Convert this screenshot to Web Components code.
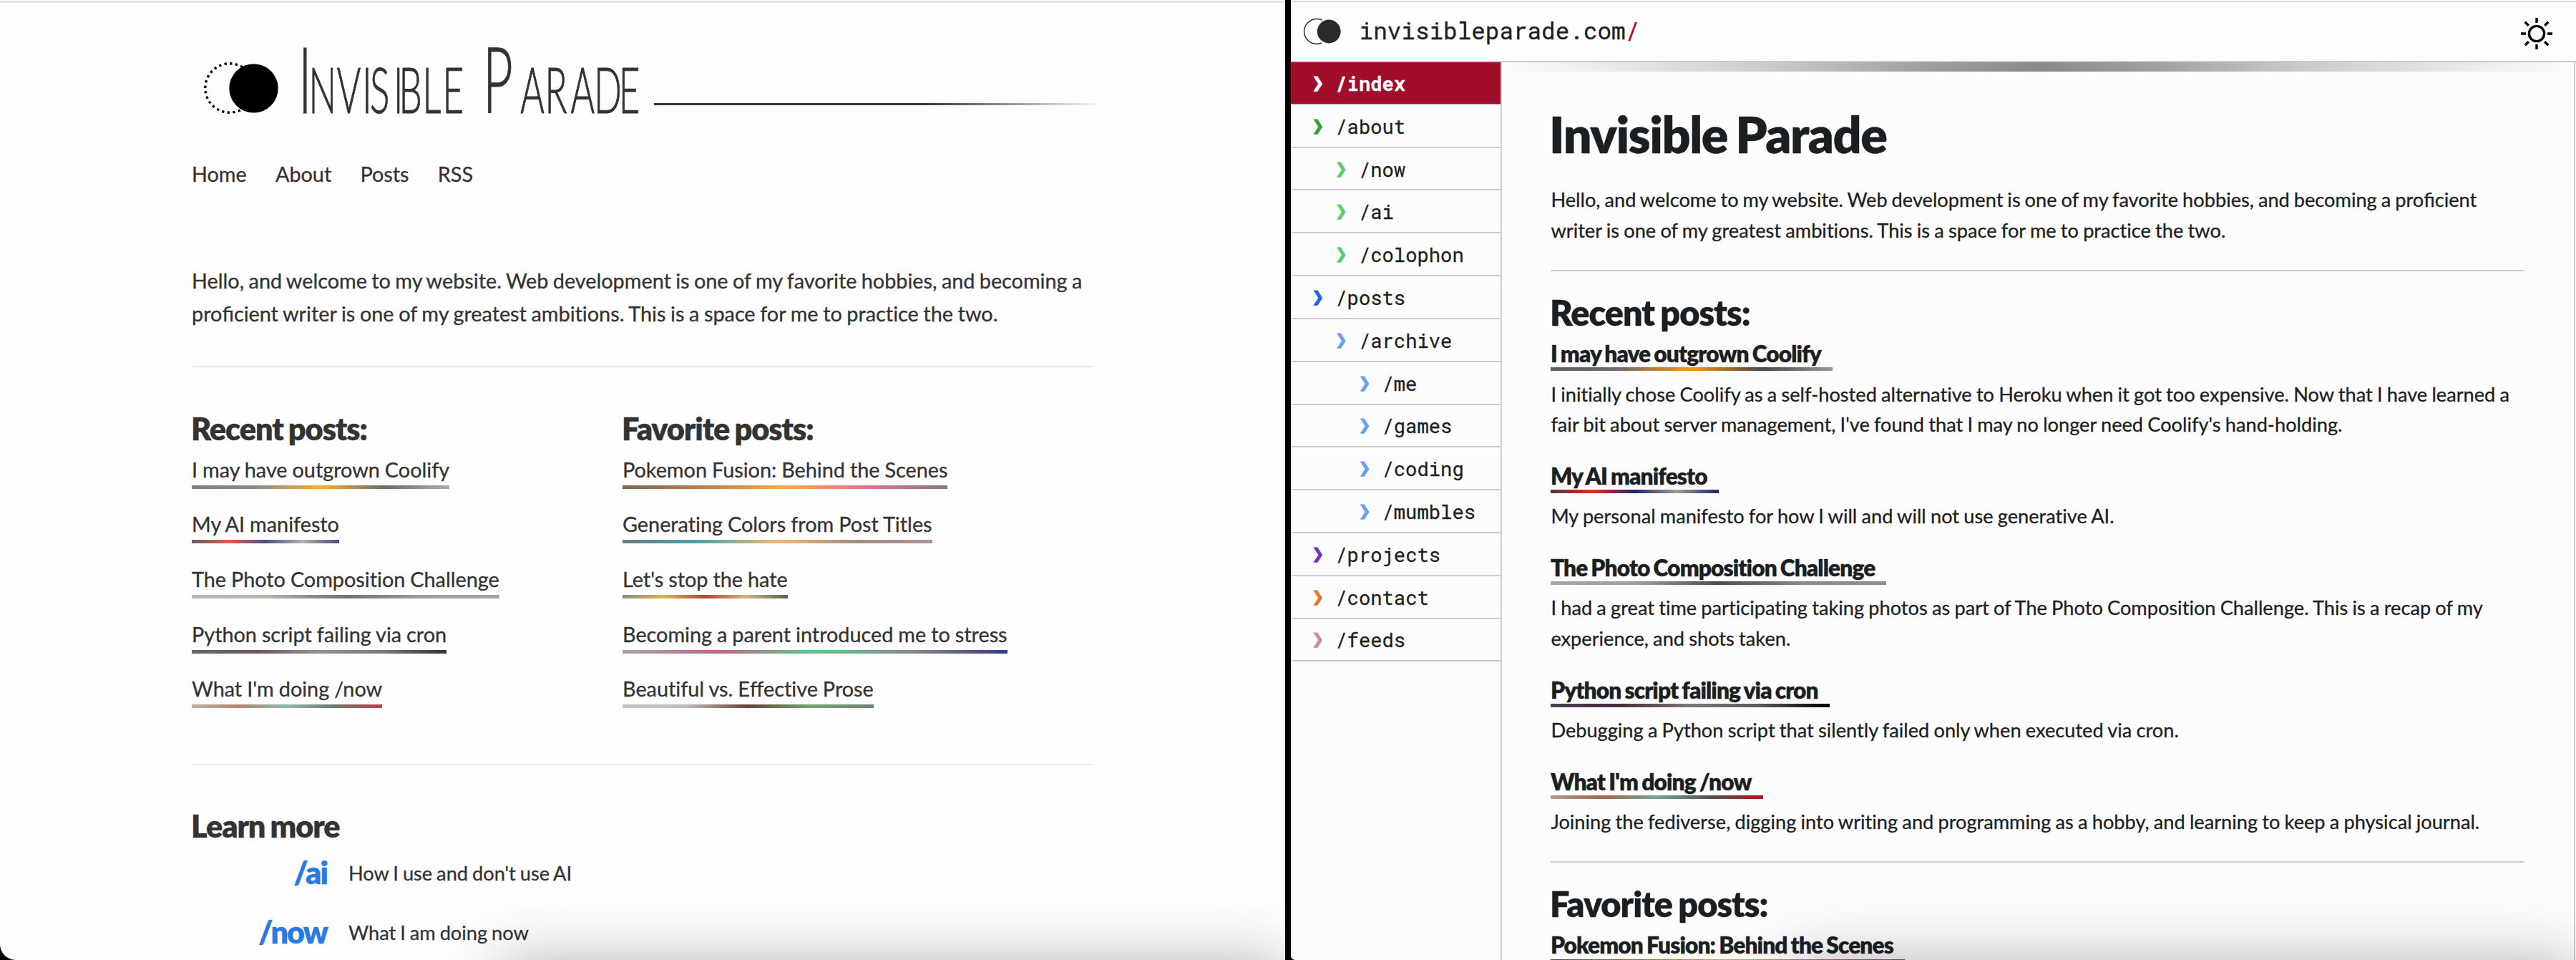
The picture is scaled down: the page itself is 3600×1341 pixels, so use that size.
<!DOCTYPE html>
<html lang="en">
<head>
<meta charset="utf-8">
<title>Invisible Parade</title>
<style>
  html, body { margin: 0; height: 1341px; overflow: hidden; background: #000; }
  body { font-family: Lato, "Liberation Sans", sans-serif; font-variant-ligatures: no-common-ligatures; -webkit-text-stroke-width: .3px; }
</style>
</head>
<body>
<compare-view>
  <classic-page slot="left"></classic-page>
  <terminal-page slot="right"></terminal-page>
</compare-view>

<script>
const define = (name, html, setup) => customElements.define(name, class extends HTMLElement {
  connectedCallback() {
    if (this.shadowRoot) return;
    const root = this.attachShadow({ mode: 'open' });
    const t = document.createElement('template');
    t.innerHTML = html;
    root.append(t.content.cloneNode(true));
    if (setup) setup(this, root);
  }
});

/* Five colours per post, generated from its title */
const G = {
  coolify: '#5c605d,#6e6e6c,#ff9500,#48484a,#9a9695',
  ai: '#3d3a3c,#e23214,#20246a,#a09c9a,#1c2268',
  photo: '#a9a6a4,#a5a294,#4c4c4c,#888886,#8e8e8b',
  python: '#43414a,#4a2d3c,#787878,#5a5a5a,#000000',
  now: '#b09c8e,#a0664c,#70a898,#4e5252,#b01418',
  pokemon: '#594629,#b15b24,#f69516,#e24c6d,#605960',
  colors: '#455b60,#228c92,#f3a64c,#887460,#9c7974',
  hate: '#736f66,#d0a324,#a61010,#c1a656,#38332a',
  stress: '#8f8f8f,#b04560,#33bc6d,#6d6d6d,#000b66',
  prose: '#b3b3b3,#aeaeae,#4a1506,#4c934c,#555b5b'
};

/* Link with a gradient bar under it */
define('post-link', `<style>
  :host { display: block; }
  a { display: inline-flex; flex-direction: column; color: inherit; white-space: nowrap; padding-right: var(--pad, 0px); vertical-align: top; }
  a > span { display: block; padding-top: var(--drop, 0px); margin-bottom: calc(-1 * var(--drop, 0px)); }
  i { display: block; height: 5px; opacity: var(--bar-opacity, 1); margin-right: calc(-1 * var(--pad, 0px)); }
</style><a><span><slot></slot></span><i></i></a>`, (el, root) => {
  root.querySelector('i').style.background = `linear-gradient(90deg, ${G[el.getAttribute('palette')]})`;
});

define('compare-view', `<style>
  :host { display: flex; gap: 8px; width: 3600px; height: 1341px; background: #000; overflow: hidden; }
  ::slotted(*) { width: 1796px; flex: none; }
</style><slot name="left"></slot><slot name="right"></slot>`);

define('classic-header', `<style>
  :host { display: flex; height: 110px; margin-left: 16px; }
  svg { flex: none; display: block; }
  .word { margin: -40px 0 -40px; }
  .rule { flex: none; width: 626px; height: 3px; margin-top: 84px; background: linear-gradient(90deg, #333 0 60%, rgba(51,51,51,0)); }
  text { font-family: Lato, sans-serif; font-weight: 300; font-size: 128px; font-variant: small-caps; fill: #333; stroke: #333; stroke-width: 1.1; }
</style>
<svg width="131" height="110" viewBox="284 60 131 110">
  <circle cx="321" cy="123" r="34.2" fill="none" stroke="#000" stroke-width="3.4" stroke-dasharray="3.3 4.37"/>
  <circle cx="354.5" cy="123.4" r="34.2" fill="#000"/>
</svg>
<svg class="word" width="499" height="190" viewBox="415 20 499 190">
  <g transform="scale(.57 1)"><text y="158.5" x="731 757 826 888 907 965 978 1036 1085 1140 1184 1276 1336 1399 1456 1517">Invisible Parade</text></g>
</svg>
<div class="rule"></div>`);

define('classic-page', `<style>
  :host { display: block; position: relative; overflow: hidden; height: 1341px; box-sizing: border-box; background: #fdfdfd; color: #333; border-bottom-left-radius: 22px;
    --bar-opacity: .8; font-size: 28.8px; line-height: 46px; word-spacing: -1px; }
  .edge { height: 3px; margin-top: 1px; background: #e5e5e5; }
  .body { width: 1260px; margin-left: 268px; padding-top: 56px; }
  nav { display: flex; gap: 40.2px; margin-top: 50.3px; }
  p { margin: 102.3px 0 0; white-space: nowrap; }
  .l2 { word-spacing: -.75px; }
  .lig { font-variant-ligatures: common-ligatures; }
  hr { border: 0; height: 2px; background: #ececec; margin: 50.5px 0 58.7px; }
  h2 { margin: 0 0 0 -1px; font-size: 43.2px; line-height: 52px; font-weight: 800; letter-spacing: -1.05px; word-spacing: -1.8px; }
  .cols { display: grid; grid-template-columns: 602px 1fr; word-spacing: -.4px; }
  post-link { height: 76.6px; --drop: 1px; }
  .list { margin-top: 8px; }
  .hr2 { margin-top: 51.9px; }
  dl { display: grid; grid-template-columns: 189px 1fr; column-gap: 30px; grid-auto-rows: 83.4px; margin: 13.4px 0 0; }
  dt { text-align: right; font-weight: 800; font-size: 43px; line-height: 52px; letter-spacing: -1.9px; color: #2a7ae2; }
  dd { margin: 6px 0 0; font-size: 27.2px; line-height: 42px; }
  .glow { position: absolute; left: 700px; right: 0; top: 1345px; height: 120px; box-shadow: 0 0 86px rgba(0,0,0,.3); pointer-events: none; }
</style>
<div class="edge"></div>
<div class="body">
  <classic-header></classic-header>
  <nav><span>Home</span><span>About</span><span>Posts</span><span>RSS</span></nav>
  <p>Hello, and welcome to my website. Web development is one of my favorite hobbies, and becoming a<br><span class="l2">pro<span class="lig">fi</span>cient writer is one of my greatest ambitions. This is a space for me to practice the two.</span></p>
  <hr>
  <div class="cols">
    <section><h2>Recent posts:</h2><div class="list">
      <post-link palette="coolify">I may have outgrown Coolify</post-link>
      <post-link palette="ai">My AI manifesto</post-link>
      <post-link palette="photo">The Photo Composition Challenge</post-link>
      <post-link palette="python">Python script failing via cron</post-link>
      <post-link palette="now">What I'm doing /now</post-link></div></section>
    <section><h2>Favorite posts:</h2><div class="list">
      <post-link palette="pokemon">Pokemon Fusion: Behind the Scenes</post-link>
      <post-link palette="colors">Generating Colors from Post Titles</post-link>
      <post-link palette="hate">Let's stop the hate</post-link>
      <post-link palette="stress">Becoming a parent introduced me to stress</post-link>
      <post-link palette="prose">Beautiful vs. E<span class="lig">ff</span>ective Prose</post-link></div></section>
  </div>
  <hr class="hr2">
  <h2>Learn more</h2>
  <dl><dt>/ai</dt><dd>How I use and don't use AI</dd><dt>/now</dt><dd>What I am doing now</dd></dl>
</div>
<div class="glow"></div>`);

define('site-bar', `<style>
  :host { display: flex; align-items: center; border-top: 2px solid #dadada; border-bottom: 2px solid #c9caca; box-sizing: border-box; height: 86px; margin-top: 1px; padding-left: 16px; background: #fdfdfd; }
  svg { display: block; flex: none; }
  .url { font: 400 32.64px/40px "Roboto Mono", "DejaVu Sans Mono", monospace; margin-left: 17.6px; flex: 1; padding-bottom: 2px; white-space: nowrap; }
  b { font-weight: 400; color: #a30d2c; }
  .sun { margin: 5px 22px 0 0; }
</style>
<svg width="62" height="50" viewBox="1820 18.7 62 50">
  <circle cx="1840" cy="43.7" r="17.4" fill="none" stroke="#2b2b2b" stroke-width="1.5"/>
  <circle cx="1857.2" cy="43.7" r="18.6" fill="#fdfdfd"/>
  <circle cx="1857.2" cy="43.7" r="16.4" fill="#2b2b2b"/>
</svg>
<span class="url">invisibleparade.com<b>/</b></span>
<svg class="sun" width="66" height="66" viewBox="-33 -33 66 66" fill="none" stroke="#000" stroke-width="3.4">
  <circle r="10.6"/>
  <path d="M0-22V-15M0 22V15M-22 0H-15M22 0H15M-16.3-16.3L-11.2-11.2M16.3-16.3L11.2-11.2M-16.3 16.3L-11.2 11.2M16.3 16.3L11.2 11.2"/>
</svg>`);

define('nav-item', `<style>
  :host { display: flex; align-items: center; height: 59.82px; box-sizing: border-box; border-bottom: 2px solid #cecece;
    padding-left: calc(29.7px + var(--depth, 0) * 32.6px); font: 400 27.2px/36px "Roboto Mono", "DejaVu Sans Mono", monospace; white-space: pre; }
  :host([active]) { background: #a30d2c; color: #fff; font-weight: 700; }
  i { font: 400 27.2px/36px "DejaVu Sans Mono", monospace; width: 32.6px; color: var(--mark); -webkit-text-stroke: 1.2px var(--mark); }
</style><i>❯</i><span><slot></slot></span>`, el => {
  el.style.setProperty('--depth', el.getAttribute('depth') || 0);
  el.style.setProperty('--mark', el.getAttribute('mark'));
});

define('post-entry', `<style>
  :host { display: block; }
  h3 { margin: 0 0 0 -.5px; font-size: 31.7px; line-height: 38.2px; font-weight: 800; letter-spacing: -.9px; word-spacing: -1.4px; height: 43.3px; }
  p { margin: 11.2px 0 0; font-size: 27.2px; line-height: 42.8px; white-space: nowrap; word-spacing: -.75px; }
  post-link { --pad: 16px; }
</style><h3></h3><p><slot></slot></p>`, (el, root) => {
  const link = document.createElement('post-link');
  link.setAttribute('palette', el.getAttribute('palette'));
  link.textContent = el.getAttribute('heading');
  root.querySelector('h3').append(link);
});

define('terminal-page', `<style>
  :host { display: flex; flex-direction: column; position: relative; overflow: hidden; height: 1341px; background: #fcfcfc; color: #1c1f21; border-bottom-left-radius: 6px; }
  .row { display: flex; flex: 1; min-height: 0; }
  aside { width: 293.4px; flex: none; border-right: 2px solid #cfcfcf; }
  main { flex: 1; border-right: 2px solid #cfcfcf; margin-right: 1px; min-width: 0; word-spacing: -1px; }
  .lig { font-variant-ligatures: common-ligatures; }
  .l2 { word-spacing: -.75px; }
  .band { height: 13px; background: linear-gradient(90deg, rgba(252,252,252,0), #e8ebea 10%, #c9cbca 25.5%, #a2a3a4 38%, #868a89 50%, #a2a3a4 62%, #c9cbca 74.5%, #e8ebea 90%, rgba(252,252,252,0)); }
  .content { width: 1361px; margin-left: 68px; }
  h1 { margin: 45.2px 0 28.8px -2.5px; font-size: 70px; line-height: 84px; font-weight: 800; letter-spacing: -1.5px; word-spacing: -3.6px; }
  p { margin: 0; font-size: 27.2px; line-height: 42.8px; white-space: nowrap; }
  hr { border: 0; height: 2px; background: #cdcdcd; margin: 33px 0 30.5px; }
  h2 { margin: 0 0 12px -1.5px; font-size: 48.6px; line-height: 54px; font-weight: 800; letter-spacing: -.95px; word-spacing: -2px; }
  .posts { display: flex; flex-direction: column; gap: 30.7px; }
  .glow { position: absolute; left: 700px; right: 0; top: 1345px; height: 120px; box-shadow: 0 0 86px rgba(0,0,0,.3); pointer-events: none; }
</style>
<site-bar></site-bar>
<div class="row">
  <aside>
    <nav-item active mark="#fff">/index</nav-item>
    <nav-item mark="#2f9e3c">/about</nav-item>
    <nav-item depth="1" mark="#5ad06a">/now</nav-item>
    <nav-item depth="1" mark="#5ad06a">/ai</nav-item>
    <nav-item depth="1" mark="#5ad06a">/colophon</nav-item>
    <nav-item mark="#1a62e8">/posts</nav-item>
    <nav-item depth="1" mark="#6a9ff0">/archive</nav-item>
    <nav-item depth="2" mark="#6a9ff0">/me</nav-item>
    <nav-item depth="2" mark="#6a9ff0">/games</nav-item>
    <nav-item depth="2" mark="#6a9ff0">/coding</nav-item>
    <nav-item depth="2" mark="#6a9ff0">/mumbles</nav-item>
    <nav-item mark="#6f35c0">/projects</nav-item>
    <nav-item mark="#e27a2c">/contact</nav-item>
    <nav-item mark="#cf8ba2">/feeds</nav-item>
  </aside>
  <main>
    <div class="band"></div>
    <div class="content">
      <h1>Invisible Parade</h1>
      <p>Hello, and welcome to my website. Web development is one of my favorite hobbies, and becoming a pro<span class="lig">fi</span>cient<br><span class="l2">writer is one of my greatest ambitions. This is a space for me to practice the two.</span></p>
      <hr>
      <h2>Recent posts:</h2>
      <div class="posts">
        <post-entry palette="coolify" heading="I may have outgrown Coolify">I initially chose Coolify as a self-hosted alternative to Heroku when it got too expensive. Now that I have learned a<br>fair bit about server management, I've found that I may no longer need Coolify's hand-holding.</post-entry>
        <post-entry palette="ai" heading="My AI manifesto">My personal manifesto for how I will and will not use generative AI.</post-entry>
        <post-entry palette="photo" heading="The Photo Composition Challenge">I had a great time participating taking photos as part of The Photo Composition Challenge. This is a recap of my<br>experience, and shots taken.</post-entry>
        <post-entry palette="python" heading="Python script failing via cron">Debugging a Python script that silently failed only when executed via cron.</post-entry>
        <post-entry palette="now" heading="What I'm doing /now">Joining the fediverse, digging into writing and programming as a hobby, and learning to keep a physical journal.</post-entry>
      </div>
      <hr>
      <h2>Favorite posts:</h2>
      <post-entry palette="pokemon" heading="Pokemon Fusion: Behind the Scenes"></post-entry>
    </div>
  </main>
</div>
<div class="glow"></div>`);
</script>
</body>
</html>
